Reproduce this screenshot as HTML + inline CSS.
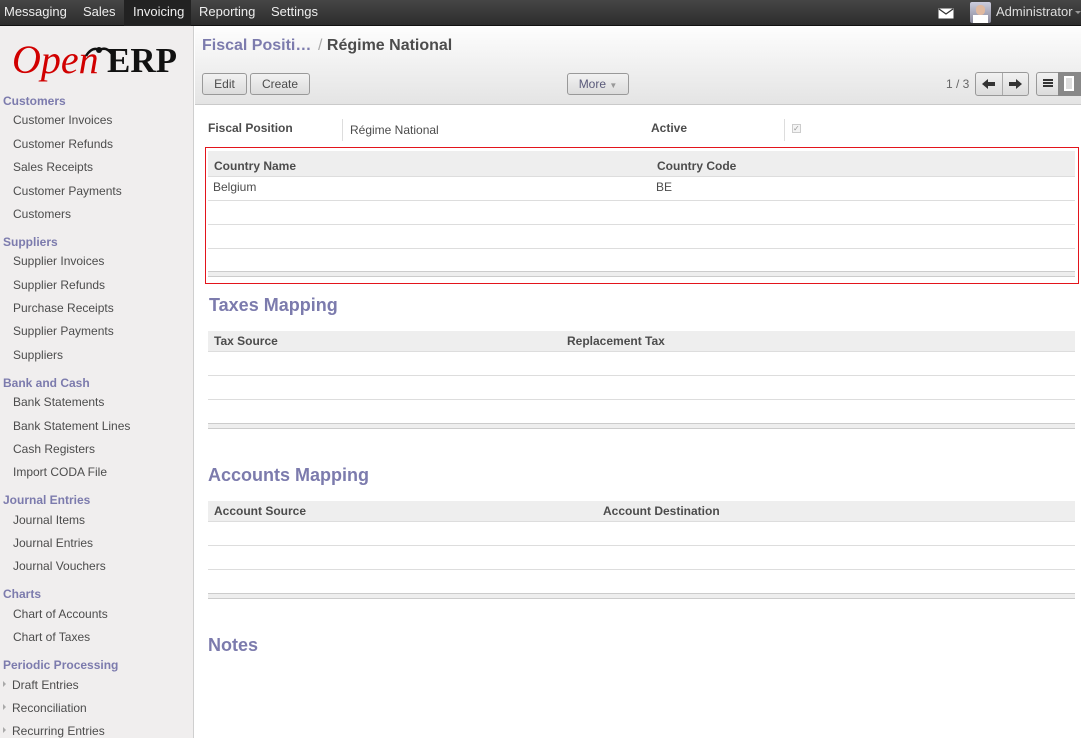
<!DOCTYPE html>
<html><head><meta charset="utf-8"><style>
*{margin:0;padding:0;box-sizing:border-box}
body{width:1081px;height:738px;overflow:hidden;font-family:"Liberation Sans",Arial,sans-serif;font-size:12px;color:#4c4c4c;background:#fff;position:relative}
.a{position:absolute;white-space:nowrap}
#top{left:0;top:0;width:1081px;height:26px;background:linear-gradient(#464646,#2c2c2c);border-bottom:1px solid #111}
#top .m{top:0;height:26px;line-height:24px;color:#eee;font-size:13px}
#side{left:0;top:26px;width:194px;height:712px;background:#f0eeee;border-right:1px solid #cfcfcf}
.h{left:3px;color:#7c7bad;font-weight:bold;font-size:12px}
.i{left:13px;color:#4c4c4c;font-size:12px}
.tri{left:3px;width:0;height:0;border-left:3px solid #aaa;border-top:3px solid transparent;border-bottom:3px solid transparent}
#hd{left:195px;top:27px;width:886px;height:78px;background:linear-gradient(#fdfdfd,#e4e4e4);border-bottom:1px solid #cacaca}
.btn{height:22px;border:1px solid #999;border-radius:3px;background:linear-gradient(#f2f2f2,#dcdcdc);color:#4c4c4c;font-size:12px;line-height:20px;text-align:center}
.th{background:#eee;border-bottom:1px solid #ddd;font-weight:bold;color:#4c4c4c}
.ln{height:1px;background:#ddd}
.ft{height:6px;background:#eee;border-top:1px solid #ccc;border-bottom:1px solid #ccc}
.sec{color:#7c7bad;font-weight:bold;font-size:18px}
</style></head><body>
<div id="top" class="a">
<div class="a" style="left:124px;top:0;width:67px;height:26px;background:#222"></div>
<div class="a m" style="left:4px">Messaging</div>
<div class="a m" style="left:83px">Sales</div>
<div class="a m" style="left:133px">Invoicing</div>
<div class="a m" style="left:199px">Reporting</div>
<div class="a m" style="left:271px">Settings</div>
<svg class="a" style="left:938px;top:8px" width="16" height="11"><rect x="0.5" y="0.5" width="15" height="10" fill="#fff"/><path d="M1 1 L8 6 L15 1" stroke="#333" stroke-width="1.3" fill="none"/></svg>
<div class="a" style="left:970px;top:2px;width:21px;height:21px;background:linear-gradient(#ccd,#889);border-radius:2px"><div class="a" style="left:6px;top:3px;width:9px;height:10px;border-radius:4px;background:#e0b9a0"></div><div class="a" style="left:3px;top:13px;width:15px;height:8px;background:#fff"></div></div>
<div class="a m" style="left:996px;color:#ddd">Administrator</div>
<div class="a" style="left:1075px;top:11px;border-left:3px solid transparent;border-right:3px solid transparent;border-top:3px solid #999"></div>
</div>
<div id="side" class="a">
<div class="a" style="left:12px;top:14px;font-family:'Liberation Serif',serif;font-style:italic;font-size:40px;color:#d10000;line-height:40px">Open</div>
<svg class="a" style="left:84px;top:18px" width="30" height="14"><path d="M2 12 Q8 2 16 6 Q22 2 28 10" stroke="#111" stroke-width="2.5" fill="none"/><circle cx="15" cy="6" r="3" fill="#111"/></svg>
<div class="a" style="left:107px;top:15px;font-family:'Liberation Serif',serif;font-weight:bold;font-size:35px;color:#111;line-height:40px">ERP</div>
</div>
<div class="a h" style="top:94px">Customers</div>
<div class="a i" style="top:113px">Customer Invoices</div>
<div class="a i" style="top:137px">Customer Refunds</div>
<div class="a i" style="top:160px">Sales Receipts</div>
<div class="a i" style="top:184px">Customer Payments</div>
<div class="a i" style="top:207px">Customers</div>
<div class="a h" style="top:235px">Suppliers</div>
<div class="a i" style="top:254px">Supplier Invoices</div>
<div class="a i" style="top:278px">Supplier Refunds</div>
<div class="a i" style="top:301px">Purchase Receipts</div>
<div class="a i" style="top:324px">Supplier Payments</div>
<div class="a i" style="top:348px">Suppliers</div>
<div class="a h" style="top:376px">Bank and Cash</div>
<div class="a i" style="top:395px">Bank Statements</div>
<div class="a i" style="top:419px">Bank Statement Lines</div>
<div class="a i" style="top:442px">Cash Registers</div>
<div class="a i" style="top:465px">Import CODA File</div>
<div class="a h" style="top:493px">Journal Entries</div>
<div class="a i" style="top:513px">Journal Items</div>
<div class="a i" style="top:536px">Journal Entries</div>
<div class="a i" style="top:559px">Journal Vouchers</div>
<div class="a h" style="top:587px">Charts</div>
<div class="a i" style="top:607px">Chart of Accounts</div>
<div class="a i" style="top:630px">Chart of Taxes</div>
<div class="a h" style="top:658px">Periodic Processing</div>
<div class="a tri" style="top:681px"></div><div class="a i" style="left:12px;top:678px">Draft Entries</div>
<div class="a tri" style="top:704px"></div><div class="a i" style="left:12px;top:701px">Reconciliation</div>
<div class="a tri" style="top:727px"></div><div class="a i" style="left:12px;top:724px">Recurring Entries</div>

<div id="hd" class="a"></div>
<div class="a" style="left:202px;top:37px;font-size:16px;font-weight:bold;color:#7c7bad">Fiscal Positi…</div>
<div class="a" style="left:318px;top:37px;font-size:16px;font-weight:bold;color:#4c4c4c"><span style="color:#aaa;font-weight:normal">/ </span>Régime National</div>
<div class="a btn" style="left:202px;top:73px;width:45px">Edit</div>
<div class="a btn" style="left:250px;top:73px;width:60px">Create</div>
<div class="a btn" style="left:567px;top:73px;width:62px;color:#5a5a7a">More <span style="font-size:8px;color:#999">▼</span></div>
<div class="a" style="left:946px;top:77px;color:#666">1 / 3</div>
<div class="a btn" style="left:975px;top:72px;width:54px;height:24px"></div>
<div class="a" style="left:1002px;top:73px;width:1px;height:22px;background:#aaa"></div>
<svg class="a" style="left:982px;top:79px" width="14" height="10"><path d="M0 5 L6 0 L6 3 L13 3 L13 7 L6 7 L6 10 Z" fill="#333"/></svg>
<svg class="a" style="left:1009px;top:79px" width="14" height="10"><path d="M13 5 L7 0 L7 3 L0 3 L0 7 L7 7 L7 10 Z" fill="#333"/></svg>
<div class="a btn" style="left:1036px;top:72px;width:45px;height:24px"></div>
<div class="a" style="left:1058px;top:72px;width:23px;height:24px;background:#888"></div>
<div class="a" style="left:1064px;top:76px;width:10px;height:15px;border:2px solid #fff;background:#ddd"></div>
<div class="a" style="left:1043px;top:79px;width:10px;height:2px;background:#333;box-shadow:0 3px 0 #333,0 6px 0 #333"></div>

<div class="a" style="left:208px;top:121px;font-weight:bold;color:#4c4c4c">Fiscal Position</div>
<div class="a" style="left:342px;top:119px;width:1px;height:22px;background:#ddd"></div>
<div class="a" style="left:350px;top:123px">Régime National</div>
<div class="a" style="left:651px;top:121px;font-weight:bold">Active</div>
<div class="a" style="left:784px;top:119px;width:1px;height:22px;background:#ddd"></div>
<div class="a" style="left:792px;top:124px;width:9px;height:9px;border:1px solid #ccc;background:#f4f4f4;font-size:8px;line-height:7px;color:#999">✓</div>

<div class="a" style="left:205px;top:147px;width:874px;height:137px;border:1px solid #e3141b"></div>
<div class="a th" style="left:208px;top:151px;width:867px;height:26px"></div>
<div class="a" style="left:214px;top:159px;font-weight:bold">Country Name</div>
<div class="a" style="left:657px;top:159px;font-weight:bold">Country Code</div>
<div class="a" style="left:213px;top:180px">Belgium</div>
<div class="a" style="left:656px;top:180px">BE</div>
<div class="a ln" style="left:208px;top:200px;width:867px"></div>
<div class="a ln" style="left:208px;top:224px;width:867px"></div>
<div class="a ln" style="left:208px;top:248px;width:867px"></div>
<div class="a ft" style="left:208px;top:271px;width:867px"></div>

<div class="a sec" style="left:209px;top:295px">Taxes Mapping</div>
<div class="a th" style="left:208px;top:331px;width:867px;height:21px"></div>
<div class="a" style="left:214px;top:334px;font-weight:bold">Tax Source</div>
<div class="a" style="left:567px;top:334px;font-weight:bold">Replacement Tax</div>
<div class="a ln" style="left:208px;top:375px;width:867px"></div>
<div class="a ln" style="left:208px;top:399px;width:867px"></div>
<div class="a ft" style="left:208px;top:423px;width:867px"></div>

<div class="a sec" style="left:208px;top:465px">Accounts Mapping</div>
<div class="a th" style="left:208px;top:501px;width:867px;height:21px"></div>
<div class="a" style="left:214px;top:504px;font-weight:bold">Account Source</div>
<div class="a" style="left:603px;top:504px;font-weight:bold">Account Destination</div>
<div class="a ln" style="left:208px;top:545px;width:867px"></div>
<div class="a ln" style="left:208px;top:569px;width:867px"></div>
<div class="a ft" style="left:208px;top:593px;width:867px"></div>

<div class="a sec" style="left:208px;top:635px">Notes</div>
</body></html>
